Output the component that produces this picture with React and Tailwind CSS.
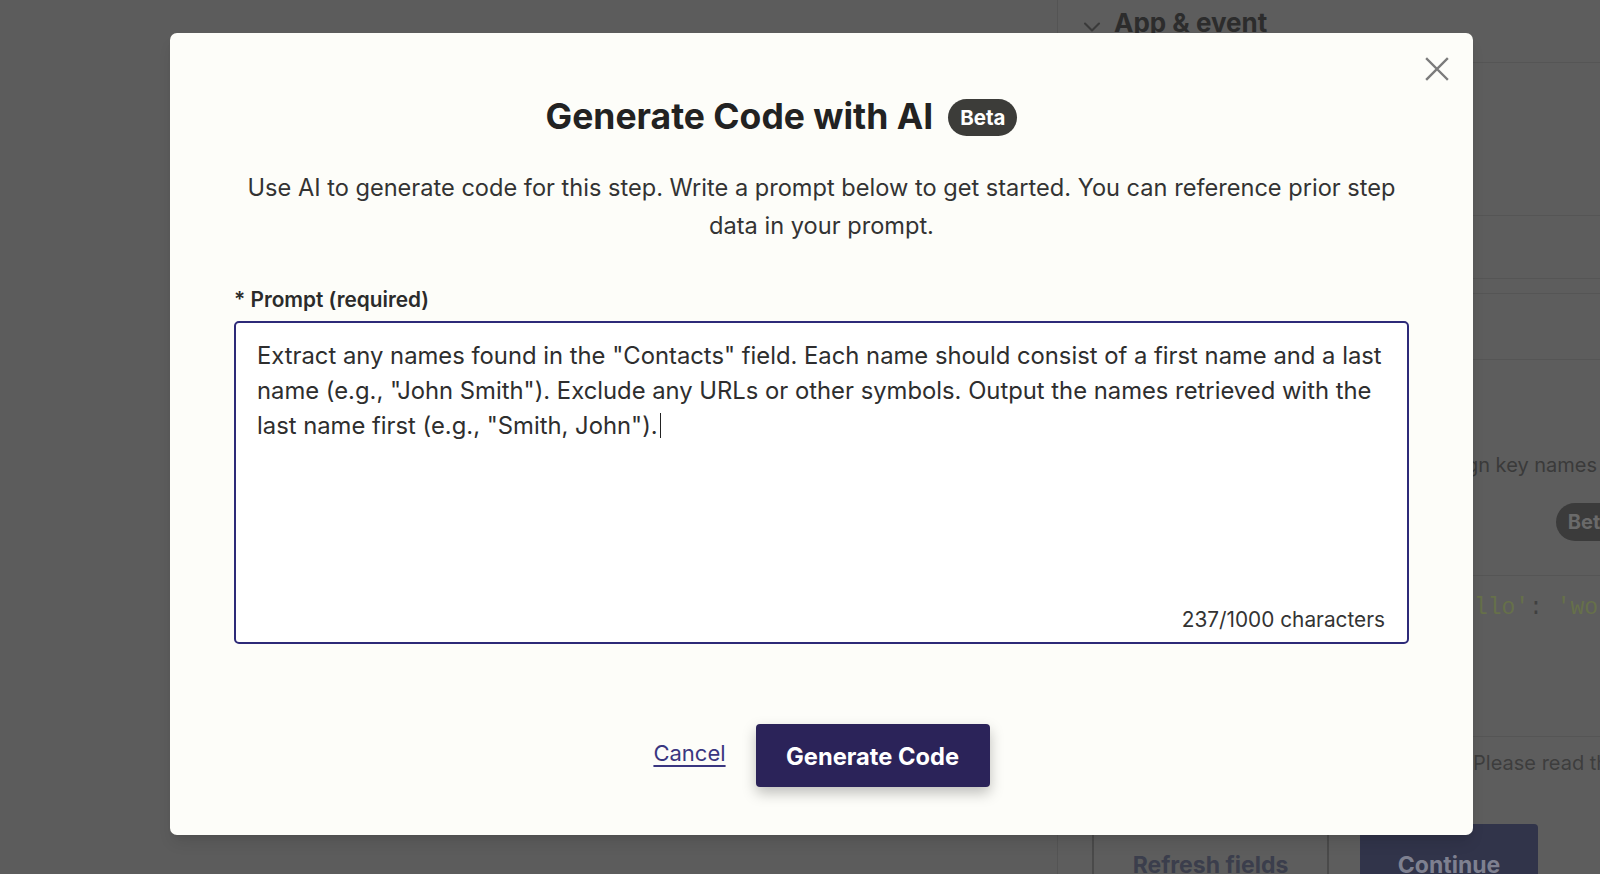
import { ChevronDown } from "lucide-react";

const promptLines = [
  'Extract any names found in the "Contacts" field. Each name should consist of a first name and a last',
  'name (e.g., "John Smith"). Exclude any URLs or other symbols. Output the names retrieved with the',
  'last name first (e.g., "Smith, John").',
];

function SidePanel() {
  return (
    <aside className="flex w-[543px] shrink-0 flex-col border-l border-[#545454] bg-[#5d5d5d] font-['Inter',sans-serif]">
      <div className="flex h-[63px] shrink-0 items-start gap-[8px] border-b border-[#555] pl-[20px] pt-[5px]">
        <ChevronDown className="mt-[8px] h-[28px] w-[28px] text-[#3a3a3a]" strokeWidth={1.8} />
        <span className="text-[26px] font-bold leading-[36px] text-[#2c2c2c]">App &amp; event</span>
      </div>
      <div className="h-[153px] shrink-0 border-b border-[#555]" />
      <div className="h-[63px] shrink-0 border-b border-[#555]" />
      <div className="mt-[14px] h-[67px] shrink-0 border-y border-[#555]" />
      <div className="flex h-[216px] shrink-0 flex-col border-b border-[#555] pl-[31px]">
        <p className="mt-[92px] whitespace-nowrap text-[20px] leading-[26px] text-[#3a3a3a]">
          Create input data fields below, then assign key names to values
        </p>
        <div className="mt-[25px] flex justify-end">
          <span className="-mr-[24px] rounded-full bg-[#3b3b3b] px-[12px] text-[20px] font-bold leading-[38px] text-[#6a6a6a]">
            Beta
          </span>
        </div>
      </div>
      <div className="h-[161px] shrink-0 border-b border-[#555] pl-[57px] pt-[18px]">
        <pre className="whitespace-pre font-['Liberation_Mono',monospace] text-[23px] leading-[28px] text-[#404040]">
          output = [{"{"}<span className="text-[#66704a]">'id'</span>: 1234, <span className="text-[#66704a]">'hello'</span>: <span className="text-[#66704a]">'world'</span>{"}"}]
        </pre>
      </div>
      <div className="flex flex-col">
        <p className="mt-[13px] whitespace-nowrap pl-[15px] text-[20px] leading-[26px] text-[#3d3d3d]">
          Code is run in a secure, isolated sandbox. Please read the documentation
        </p>
        <div className="mt-[48px] flex gap-[31px] pl-[34px]">
          <button className="h-[80px] w-[237px] rounded-[4px] border-2 border-[#4a4a4a] pt-[3px] text-[23px] font-bold text-[#3b3e4c]">
            Refresh fields
          </button>
          <button className="h-[80px] w-[178px] rounded-[4px] bg-[#31344a] pt-[3px] text-[23px] font-bold text-[#7e8090]">
            Continue
          </button>
        </div>
      </div>
    </aside>
  );
}

function GenerateModal() {
  return (
    <div className="absolute left-[170px] top-[33px] flex h-[802px] w-[1303px] flex-col rounded-[7px] bg-[#fdfdf9] px-[64px] pt-[64px] font-['Inter',sans-serif] shadow-lg">
      <button className="absolute right-[24px] top-[24px] text-[#7b7b7b]" aria-label="Close">
        <svg width="24" height="24" viewBox="0 0 24 24" fill="none" stroke="currentColor" strokeWidth="2.4" strokeLinecap="square">
          <path d="M2 2 L22 22 M22 2 L2 22" />
        </svg>
      </button>

      <div className="flex h-[40px] items-center justify-center gap-[15px] pr-[80px]">
        <h2 className="text-[35.5px] font-bold leading-[40px] text-[#222]">Generate Code with AI</h2>
        <span className="rounded-full bg-[#3c3c39] px-[12px] text-[20.5px] font-bold leading-[37px] text-white">Beta</span>
      </div>

      <p className="mt-[32px] text-center text-[23.6px] leading-[37.5px] text-[#333]">
        Use AI to generate code for this step. Write a prompt below to get started. You can reference prior step data in your prompt.
      </p>

      <label className="mt-[43px] text-[20.8px] font-semibold leading-[26px] text-[#2b2b2b]">* Prompt (required)</label>

      <div className="relative mt-[8px] h-[323px] rounded-[5px] border-2 border-[#2d2a78] bg-white pl-[21px] pt-[15px] text-[23.8px] leading-[35px] text-[#2e2e2e]">
        {promptLines.map((line, i) => (
          <div key={i} className="whitespace-nowrap">
            {line}
            {i === promptLines.length - 1 && (
              <span className="ml-[2px] inline-block h-[25px] w-[1.5px] translate-y-[4px] bg-[#222]" />
            )}
          </div>
        ))}
        <span className="absolute bottom-[9px] right-[22px] text-[20.8px] leading-[26px] text-[#333]">237/1000 characters</span>
      </div>

      <div className="mt-[80px] flex items-center justify-center gap-[30px]">
        <button className="mb-[4px] text-[22px] text-[#3a3680] underline underline-offset-[4px]">Cancel</button>
        <button className="h-[63px] w-[234px] rounded-[4px] bg-[#2b2359] pt-[3px] text-[23.7px] font-bold text-white shadow-[0_6px_14px_rgba(0,0,0,0.25)]">
          Generate Code
        </button>
      </div>
    </div>
  );
}

export default function App() {
  return (
    <div className="relative flex h-[874px] w-full overflow-hidden bg-[#5c5c5c]">
      <div className="flex-1" />
      <SidePanel />
      <GenerateModal />
    </div>
  );
}
